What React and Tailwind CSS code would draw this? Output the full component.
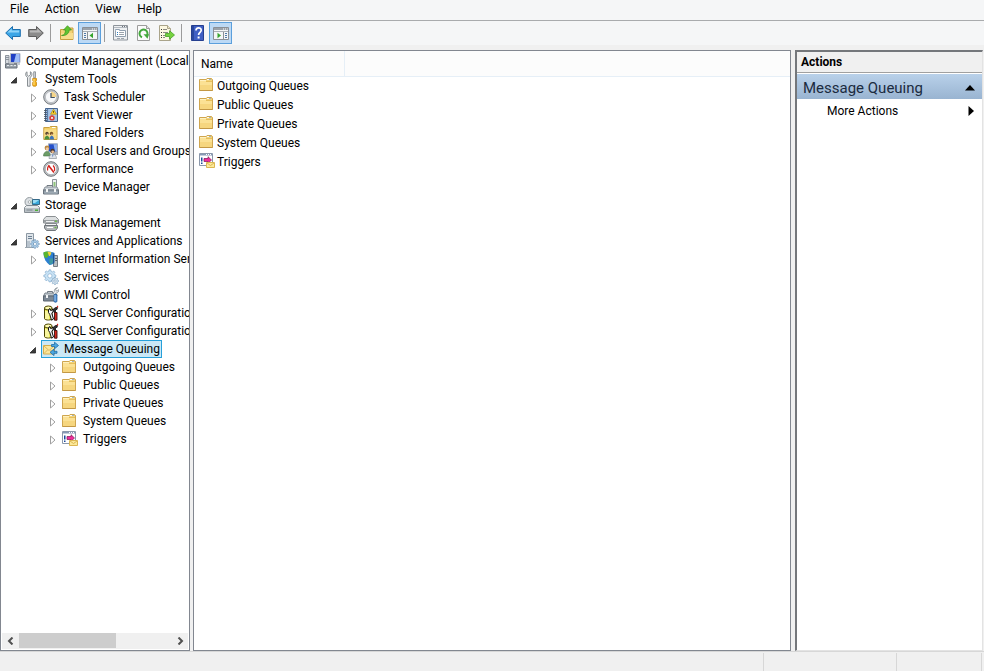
import React from "react";

function Svg({ children, className = "" }) {
  return (
    <svg
      viewBox="0 0 16 16"
      className={`block h-4 w-4 shrink-0 ${className}`}
      fill="none"
      aria-hidden="true"
    >
      {children}
    </svg>
  );
}

/* ---------- toolbar icons ---------- */

const BackIcon = () => (
  <Svg>
    <path d="M.7 8 7.500 1.500V4.500h7.800v7H7.500v3z" fill="#3aa5e6" stroke="#1c6fae" />
    <path d="M2.300 7.600 6.700 3.500v2h7.500v2.100z" fill="#8fd4f8" />
  </Svg>
);

const ForwardIcon = () => (
  <Svg>
    <path d="M15.300 8 8.500 1.500v3H.7v7h7.800v3z" fill="#8b8b8b" stroke="#5d5d5d" />
    <path d="M13.600 7.600 9.300 3.500v2H1.800v2.100z" fill="#b9b9b9" />
  </Svg>
);

const UpFolderIcon = () => (
  <Svg>
    <path d="M1.500 14.500v-10h5l1-1.500h6.500v11.500z" fill="#f3d277" stroke="#c99f3f" />
    <path d="M2 8h12v6H2z" fill="#f8dd8c" />
    <path d="M2.500 10.500C5.500 10 6.500 8 6.500 5H4.500L8.500.7l4 4.300h-2.300C10 9 6.500 11 2.500 10.500z" fill="#5fc431" stroke="#3b9420" strokeWidth=".7" />
  </Svg>
);

const PaneIcon = ({ flip }) => (
  <Svg>
    <path d="M.5 2.500h15v12H.5z" fill="#f4f5f6" stroke="#8a8f96" />
    <path d="M1 3h14v2H1z" fill="#9ba2aa" />
    <path d="M10 4h1M12 4h1M14 4h.7" stroke="#fff" />
    <path d="M1 6.500h14" stroke="#a9afb6" />
    {flip ? (
      <>
        <path d="M10.500 7v7.500" stroke="#8a8f96" />
        <path d="M12 8.500h2M12 10.500h2M12 12.500h2" stroke="#4f79a8" />
        <path d="m4.500 7.800 3.500 2.700-3.500 2.700z" fill="#36a52d" />
      </>
    ) : (
      <>
        <path d="M5.500 7v7.500" stroke="#8a8f96" />
        <path d="M2 8.500h2M2 10.500h2M2 12.500h2" stroke="#4f79a8" />
        <path d="M11 7.800 7.500 10.500 11 13.200z" fill="#36a52d" />
      </>
    )}
  </Svg>
);

const PropertiesIcon = () => (
  <Svg>
    <path d="M.5.500h14v14.500H.5z" fill="#eef0f2" stroke="#8e949b" />
    <path d="M1 2.500h13" stroke="#b4bac1" />
    <path d="M9 1.500h1M11 1.500h1M13 1.500h.7" stroke="#6b727a" />
    <path d="M2.500 5.500v-1h4v1h6v6h-10z" fill="#fff" stroke="#91a0b0" />
    <path d="M4 7.500h1M4 9.500h1" stroke="#2d7fc0" />
    <path d="M6 7.500h5M6 9.500h5" stroke="#9ba3ac" />
    <path d="M4 13.500h3M8 13.500h3" stroke="#9ba3ac" />
  </Svg>
);

const RefreshIcon = () => (
  <Svg>
    <path d="M1.500.5h9l3 3v12h-12z" fill="#fbfbfb" stroke="#9c9c9c" />
    <path d="M10.500.5v3h3" fill="#e4e4e4" stroke="#9c9c9c" />
    <path d="M6 12.300A4 4 0 1 1 10.700 11" stroke="#43a83c" strokeWidth="2" />
    <path d="M7.500 9.300h5.500l-1.500 4.500z" fill="#43a83c" />
  </Svg>
);

const ExportIcon = () => (
  <Svg>
    <path d="M.5.500h8l3 3v12H.5z" fill="#fdf8e1" stroke="#aaa48a" />
    <path d="M8.500.5v3h3" fill="#efe8c8" stroke="#aaa48a" />
    <path d="M2 4.500h1M2 7.500h1M2 10.500h1M2 12.500h1" stroke="#3b3b3b" />
    <path d="M4 4.500h4M4 7.500h5M4 10.500h2M4 12.500h2" stroke="#8c8a80" />
    <path d="M6.500 8.500h4V5.700l5 4.300-5 4.300v-2.800h-4z" fill="#76d23f" stroke="#449f24" strokeWidth=".8" />
  </Svg>
);

const HelpIcon = () => (
  <Svg>
    <path d="M1.500.5h12v15h-12z" fill="#3f5fc4" stroke="#263f8f" />
    <path d="M2 1h2v14H2z" fill="#29479f" />
    <path d="M6 5.500C6 2 11.200 2 11.200 5.300c0 2-2.600 2.200-2.600 4.700" stroke="#fff" strokeWidth="1.700" />
    <path d="M7.600 11.500h2v2h-2z" fill="#fff" />
  </Svg>
);

/* ---------- tree and list icons ---------- */

const ComputerIcon = () => (
  <Svg>
    <path d="M5.500.5h9.500v9H5.500z" fill="#1f3fc4" stroke="#b4bac6" />
    <path d="M11 1h3.500v8H9z" fill="#9dbcf7" />
    <path d="M9 10h3v1.500H9z" fill="#8d949d" />
    <path d="M.5 2.500h3.500v8H.5z" fill="#d6dae0" stroke="#8d949d" />
    <path d="M1 4.500h3M1 6.500h3" stroke="#8b939d" />
    <path d="M.5 11h11.500v4H.5z" fill="#9aa2aa" stroke="#6b737c" />
    <path d="M2 12.500h2M5.500 12.500h2M9 12.500h2" stroke="#e6eaed" />
    <path d="M12 10h3v2h-3z" fill="#c3c9d1" />
  </Svg>
);

const ToolsIcon = () => (
  <Svg>
    <path d="M3 .8v3l1.700 1.500L6.400 3.800v-3c2 .8 2.200 4-.3 5.700v8.700H3.500V6.500C1 4.800 1.200 1.600 3 .8z" fill="#e7e9eb" stroke="#7d8388" strokeWidth=".9" />
    <path d="M9.700.8h1.800v6H9.700z" fill="#d4d8dc" stroke="#80868b" strokeWidth=".8" />
    <path d="M8.700 7.500h3.800v2l-.7 1 .7 1v3c0 1-3.800 1-3.800 0v-3l.7-1-.7-1z" fill="#f4b21b" stroke="#c88710" strokeWidth=".8" />
    <path d="M10 8v6" stroke="#ffe08a" />
  </Svg>
);

const ClockIcon = () => (
  <Svg>
    <circle cx="8" cy="8" r="7.300" fill="#c9ccd0" stroke="#74797e" />
    <circle cx="8" cy="8" r="5.600" fill="#f7f8fa" stroke="#a2a7ac" strokeWidth=".6" />
    <path d="M8 2.600A5.400 5.400 0 0 1 13.400 8H8z" fill="#f5d58a" />
    <path d="M8 4v4.500h3.800" stroke="#3d4f63" strokeWidth="1.200" />
  </Svg>
);

const EventIcon = () => (
  <Svg>
    <path d="M2.500 1.500h12v13h-12z" fill="#9fbde0" stroke="#46658f" />
    <path d="M4 2h1v12H4z" fill="#5a7cab" />
    <path d="M6 2h8v12H6z" fill="#a9c5e6" />
    <path d="M1 3.500h3M1 5.500h3M1 7.500h3M1 9.500h3M1 11.500h3M1 13.500h3" stroke="#444f5d" strokeWidth=".8" />
    <path d="m10.500 2.200 3 5h-6z" fill="#ffd52e" stroke="#b68d0b" strokeWidth=".7" />
    <path d="M10.500 4v1.800" stroke="#403400" strokeWidth=".8" />
    <circle cx="9" cy="10.900" r="2.700" fill="#d93c36" />
    <path d="m8 9.900 2 2m0-2-2 2" stroke="#fff" strokeWidth=".9" />
  </Svg>
);

const SharedIcon = () => (
  <Svg>
    <path d="M.8 14.500v-12h5.500l1-1H14v13z" fill="#f3cf68" stroke="#c99f3f" />
    <path d="M1.300 4.500h12.200V14H1.300z" fill="#f8dc87" />
    <path d="M9 2.500h3.500" stroke="#fff" />
    <circle cx="4" cy="8.500" r="1.700" fill="#584630" />
    <circle cx="8.500" cy="8.500" r="1.700" fill="#785020" />
    <path d="M1.500 14.500c0-5 5-5 5 0z" fill="#4c8f3c" />
    <path d="M6.500 14.500c0-5 4.500-5 4.500 0z" fill="#3f74b8" />
    <path d="M3.700 8.700h1.300v1.300H3.700zM8.200 8.700h1.300v1.300H8.200z" fill="#e9b98d" />
  </Svg>
);

const UsersIcon = () => (
  <Svg>
    <path d="M5.500.8h9v8h-9z" fill="#2550ca" stroke="#a2aaba" />
    <path d="M10.500 1.200H14v7h-2z" fill="#8cb0f0" />
    <path d="M10 9h5v3h-5z" fill="#a6adb7" />
    <circle cx="4" cy="5" r="2.400" fill="#b98a45" />
    <circle cx="4.300" cy="5.800" r="1.500" fill="#f0c7a0" />
    <path d="M.5 13c0-6 7-6 7 0z" fill="#6b9d66" stroke="#49734a" strokeWidth=".6" />
    <circle cx="9.500" cy="8" r="2.200" fill="#4a3829" />
    <circle cx="9.700" cy="8.800" r="1.400" fill="#eab98e" />
    <path d="M6 15.500c0-6 7.500-6 7.500 0z" fill="#dfe3e8" stroke="#7d848c" strokeWidth=".6" />
    <path d="m9.200 11.500.6 3 .6-3z" fill="#3867b4" />
  </Svg>
);

const PerformanceIcon = () => (
  <Svg>
    <circle cx="8" cy="8" r="7.300" fill="#c2c5c8" stroke="#6f7478" />
    <circle cx="8" cy="8" r="5.700" fill="#fff" stroke="#8f9498" strokeWidth=".6" />
    <path d="M4.700 9.500c-.5-2 .2-4 1.500-5M11.500 10c.4-2 .3-4-1.500-5.500" stroke="#d2231d" strokeWidth="1.100" />
    <path d="m5.500 4.500 5.500 7" stroke="#d2231d" strokeWidth="1.600" />
  </Svg>
);

const DeviceIcon = () => (
  <Svg>
    <path d="M9.500.5h4v8h-4z" fill="#eef1f3" stroke="#8b9399" />
    <path d="M10.500 3h2v4.500h-2z" fill="#8fc37a" />
    <path d="M4 8V6.500h5.500V8" stroke="#727a82" />
    <path d="M2 8h12l1.500 3H.5z" fill="#ccd3d9" stroke="#8a929a" />
    <path d="M.5 11h15v4H.5z" fill="#93a0ab" stroke="#6a747e" />
    <path d="M3 10h2v3H3zM11 10h2v3h-2z" fill="#f4f6f7" />
    <path d="M1.500 14h13" stroke="#b6bfc7" strokeWidth=".7" />
  </Svg>
);

const StorageIcon = () => (
  <Svg>
    <circle cx="5.500" cy="5" r="4.500" fill="#dde1e4" stroke="#929a9f" />
    <path d="m5.500 5 3.500-2.500V8z" fill="#b4d4bd" />
    <circle cx="5.500" cy="5" r="1.300" fill="#fff" stroke="#8d959a" strokeWidth=".7" />
    <path d="M8.500 2.500h7v5h-7z" fill="#38a7d9" stroke="#356a8a" />
    <path d="M9 3h6l-4 3H9z" fill="#9adbf3" />
    <path d="M2.500 8.500h11l2 2v5H.5v-5z" fill="#e5e8ea" stroke="#858d93" />
    <path d="M1 11h14v4H1z" fill="#bac1c6" />
    <path d="M11 12.500h3v1.500h-3z" fill="#4fae3a" />
    <path d="M2.500 13h6" stroke="#7d868d" />
  </Svg>
);

const DiskIcon = () => (
  <Svg>
    <path d="M3 1.500h9.500l3 3v3.500H.5V4.500z" fill="#dcdfe0" stroke="#8b9093" />
    <path d="M1 5h14v2.500H1z" fill="#9a9fa2" />
    <path d="M3 6.500h8" stroke="#f0f1f2" />
    <path d="M2.500 8.500h11v2h-11z" fill="#f4f5f6" stroke="#85898d" />
    <path d="M1.500 10.500h13V13l-2 2.500h-9L1.500 13z" fill="#b3b7ba" stroke="#70757a" />
    <path d="M4 12.500h6" stroke="#fff" />
    <path d="M12 5.500h2v1.500h-2zM11.500 11.700h2v1.500h-2z" fill="#71b84e" />
  </Svg>
);

const GEAR =
  "M7 1h2l.4 1.800 1.500.6 1.600-1 1.300 1.400-1 1.500.6 1.500L15 7v2l-1.700.4-.6 1.500 1 1.500-1.400 1.400-1.500-1-1.500.6L9 15H7l-.4-1.700-1.500-.6-1.500 1-1.400-1.400 1-1.500-.6-1.500L1 9V7l1.800-.4.6-1.500-1-1.500 1.400-1.400 1.500 1 1.500-.6zM8 5.500a2.500 2.500 0 1 0 0 5 2.500 2.500 0 0 0 0-5z";

const ServicesAppsIcon = () => (
  <Svg>
    <path d="M2.500.5h7v14h-7z" fill="#dfe5ea" stroke="#8c98a3" />
    <path d="M4 3.500h4M4 5.500h4" stroke="#6d8093" />
    <path d="M3 8h3v6H3z" fill="#b9c4ce" />
    <path d="M1 14.500h7" stroke="#9ba6af" />
    <g transform="translate(6 6) scale(.62)">
      <path d={GEAR} fill="#a8cbe7" stroke="#6d93b7" fillRule="evenodd" />
    </g>
  </Svg>
);

const IisIcon = () => (
  <Svg>
    <path d="M10.500 4.500h4v11h-4z" fill="#b9bfc3" stroke="#757d83" />
    <path d="M12 7.500h2M12 9.500h2" stroke="#5e666c" />
    <path d="M.5 1.500c3-1.500 7-1.500 11 .5v9c-1 2-3 3-5 3C2.500 11 .5 7 .5 1.500z" fill="#2c7fd0" />
    <path d="M.5 1.500C2.500.5 4 .5 5.500.7 5 3.500 6.500 4.700 4 6.700c-1.500.3-2.300-.2-2.700-1C.7 4.500.5 3 .5 1.500z" fill="#59b52e" />
    <path d="M4.500.8c2-.2 3 .2 4 .6C7.500 4 7.500 5 6 5z" fill="#f4d337" />
    <path d="M6 8c2-1 4-1 4.500 0v3c-1 1.500-2.500 2.500-4 2.500z" fill="#3f97a0" />
    <path d="M10.700 2.500v10" stroke="#1a4783" />
  </Svg>
);

const ServicesIcon = () => (
  <Svg>
    <g transform="scale(.86)">
      <path d={GEAR} fill="#c9e3f5" stroke="#86aecf" strokeWidth=".8" fillRule="evenodd" />
    </g>
    <g transform="translate(8 8) scale(.5)">
      <path d={GEAR} fill="#e2eef7" stroke="#6f98bb" strokeWidth="1.200" fillRule="evenodd" />
    </g>
  </Svg>
);

const WmiIcon = () => (
  <Svg>
    <path d="M4.500 6V4.500h5V6" stroke="#6f7780" />
    <path d="M2 6h10.500l1.500 3H.5z" fill="#bcc4cb" stroke="#7d868f" />
    <path d="M.5 9h13v5H.5z" fill="#7c8895" stroke="#5c6671" />
    <path d="M3 8h2v3H3z" fill="#f2f4f6" />
    <path d="M14.500.8 12.500 2.500l.5 1.200 1.200.3L15.700 2.500c.3 2-1 3.700-2.700 3.700l-1.500 1.300-1.500-1.300 1.300-1.500C11 2.500 12.500.8 14.500.8z" fill="#e2e6e9" stroke="#7c858c" strokeWidth=".7" />
    <path d="M11 7.500h3v6.700c0 1.500-3 1.500-3 0z" fill="#4b8bd0" stroke="#29609b" strokeWidth=".7" />
    <path d="M12 8v6" stroke="#b8dafa" strokeWidth=".8" />
  </Svg>
);

const SqlIcon = () => (
  <Svg>
    <path d="M1.500 3v10.500c0 2 7.500 2 7.500 0V3z" fill="#f2ee5b" stroke="#4a4300" />
    <ellipse cx="5.300" cy="3" rx="3.800" ry="2" fill="#fffcb0" stroke="#4a4300" />
    <path d="M3 6v8M5 6.500v8" stroke="#fffde0" />
    <path d="M5.500 4.500 7 3.500V5l1.500.5L10 4v2.500L8.800 8.500 10.500 14l-2 1.200L6.800 9.500 5.500 7.500z" fill="#f5f5f5" stroke="#111" />
    <path d="M10 4.500 12.500 2.500h2L14 4.500h-1.500v3H11z" fill="#333" stroke="#111" strokeWidth=".8" />
    <path d="M11.500 7.500H14v7.700h-2.500z" fill="#d8261c" stroke="#40100c" strokeWidth=".9" />
    <path d="M14.500.8v1.700" stroke="#d8261c" strokeWidth="1.300" />
  </Svg>
);

const MessageQueueIcon = () => (
  <Svg>
    <path d="M.5 4.500h11v8.500H.5z" fill="#fbe79c" stroke="#d5ad4c" />
    <path d="m1 5 5 4.500L11 5M1 12.500 4.500 9M11 12.500 7.500 9" stroke="#d9b862" />
    <path d="M8.500 3.500h3V1.200l4 3.300-4 3.300V5.500h-3z" fill="#4aa7e0" stroke="#1e6ba6" strokeWidth=".8" />
    <path d="M14 10.300h-3V8l-4 3.300 4 3.300v-2.300h3z" fill="#4aa7e0" stroke="#1e6ba6" strokeWidth=".8" />
  </Svg>
);

const FolderIcon = () => (
  <Svg>
    <path d="M.5 13.500v-11H7l1-1h4.500l1 1v11z" fill="#ecc766" stroke="#cfa650" />
    <path d="M1 3.500h12V13H1z" fill="#fbe194" />
    <path d="M1 8h12v5H1z" fill="#f6d67f" />
    <path d="M1 3.500h6" stroke="#fff1c0" />
    <path d="M8 2.500h2" stroke="#fffdf2" />
    <path d="M10 2.500h2" stroke="#9fb6c6" />
    <path d="M7 4.500h6" stroke="#e6bf5c" />
    <path d="M.5 13.500h13" stroke="#c39845" />
  </Svg>
);

const TriggerIcon = () => (
  <Svg>
    <path d="M.5.500h13v12H.5z" fill="#fff" stroke="#8b98ab" />
    <path d="M1 1h12v1.500H1z" fill="#8799b5" />
    <path d="M7 1.500h1M9 1.500h1M11 1.500h1" stroke="#fff" />
    <path d="M2 4.500h1.500v4H2zM2 9.500h1.500V11H2z" fill="#1b4a9c" />
    <path d="M5 5.500h4V3.700L12.500 7 9 10.300V8.500H5z" fill="#ef2b9a" stroke="#7f1353" strokeWidth=".7" />
    <path d="M7.500 9.500h8v5h-8z" fill="#fbe99a" stroke="#dcb652" />
    <path d="m8 10 3.500 2.500L15 10" stroke="#dcb652" />
  </Svg>
);

/* ---------- data ---------- */

const PAD = ["pl-[2px]", "pl-[5px]", "pl-6", "pl-[43px]"];

const TREE = [
  { level: 0, label: "Computer Management (Local", Icon: ComputerIcon },
  { level: 1, label: "System Tools", Icon: ToolsIcon, state: "open" },
  { level: 2, label: "Task Scheduler", Icon: ClockIcon, state: "closed" },
  { level: 2, label: "Event Viewer", Icon: EventIcon, state: "closed" },
  { level: 2, label: "Shared Folders", Icon: SharedIcon, state: "closed" },
  { level: 2, label: "Local Users and Groups", Icon: UsersIcon, state: "closed" },
  { level: 2, label: "Performance", Icon: PerformanceIcon, state: "closed" },
  { level: 2, label: "Device Manager", Icon: DeviceIcon },
  { level: 1, label: "Storage", Icon: StorageIcon, state: "open" },
  { level: 2, label: "Disk Management", Icon: DiskIcon },
  { level: 1, label: "Services and Applications", Icon: ServicesAppsIcon, state: "open" },
  { level: 2, label: "Internet Information Services", Icon: IisIcon, state: "closed" },
  { level: 2, label: "Services", Icon: ServicesIcon },
  { level: 2, label: "WMI Control", Icon: WmiIcon },
  { level: 2, label: "SQL Server Configuration", Icon: SqlIcon, state: "closed" },
  { level: 2, label: "SQL Server Configuration", Icon: SqlIcon, state: "closed" },
  { level: 2, label: "Message Queuing", Icon: MessageQueueIcon, state: "open", selected: true },
  { level: 3, label: "Outgoing Queues", Icon: FolderIcon, state: "closed" },
  { level: 3, label: "Public Queues", Icon: FolderIcon, state: "closed" },
  { level: 3, label: "Private Queues", Icon: FolderIcon, state: "closed" },
  { level: 3, label: "System Queues", Icon: FolderIcon, state: "closed" },
  { level: 3, label: "Triggers", Icon: TriggerIcon, state: "closed" },
];

const LIST = [
  { label: "Outgoing Queues", Icon: FolderIcon },
  { label: "Public Queues", Icon: FolderIcon },
  { label: "Private Queues", Icon: FolderIcon },
  { label: "System Queues", Icon: FolderIcon },
  { label: "Triggers", Icon: TriggerIcon },
];

/* ---------- parts ---------- */

function ToolButton({ label, active, children }) {
  return (
    <button
      type="button"
      aria-label={label}
      aria-pressed={active}
      className={`flex h-[22px] w-[23px] items-center justify-center border ${
        active ? "border-[#5b9fdc] bg-[#bcd9f5]" : "border-transparent"
      }`}
    >
      {children}
    </button>
  );
}

const Separator = () => <span className="mr-1 ml-[3px] h-[18px] w-px bg-[#9b9b9b]" />;

function Expander({ state, label }) {
  if (!state) return <span className="w-4 shrink-0" />;
  return (
    <button
      type="button"
      aria-label={`${state === "open" ? "Collapse" : "Expand"} ${label}`}
      className="flex h-[18px] w-4 shrink-0 items-center justify-center pt-0.5"
    >
      <svg viewBox="0 0 8 10" className="h-[10px] w-2" fill="none" aria-hidden="true">
        {state === "open" ? (
          <path d="M6.500 2.500v5.500H1z" fill="#3c3c3c" stroke="#262626" strokeWidth=".8" />
        ) : (
          <path d="M2.500 1v8L7 5z" fill="#fff" stroke="#a0a0a0" />
        )}
      </svg>
    </button>
  );
}

function TreeRow({ level, label, Icon, state, selected }) {
  return (
    <li
      role="treeitem"
      aria-level={level + 1}
      aria-selected={!!selected}
      aria-expanded={state ? state === "open" : undefined}
      className={`flex h-[18px] items-center whitespace-nowrap ${PAD[level]}`}
    >
      {level > 0 && <Expander state={state} label={label} />}
      <span
        className={`flex h-[18px] shrink-0 items-center gap-[5px] border px-px ${
          selected ? "border-[#26a0da] bg-[#cbe8f6]" : "border-transparent"
        }`}
      >
        <Icon />
        <span>{label}</span>
      </span>
    </li>
  );
}

export default function App() {
  return (
    <div className="flex h-screen flex-col overflow-hidden bg-[#f0f0f0] font-['Roboto','Noto_Sans',sans-serif] text-[12px] leading-4 text-black">
      <nav className="flex h-[21px] shrink-0 border-b border-[#a9abad] bg-[#f5f6f7] pl-0.5">
        {["File", "Action", "View", "Help"].map((m) => (
          <button key={m} type="button" className="px-2 pb-0.5">
            {m}
          </button>
        ))}
      </nav>

      <div className="flex shrink-0 items-center bg-[#f5f6f7] py-px pl-px" role="toolbar">
        <ToolButton label="Back"><BackIcon /></ToolButton>
        <ToolButton label="Forward"><ForwardIcon /></ToolButton>
        <Separator />
        <ToolButton label="Up one level"><UpFolderIcon /></ToolButton>
        <ToolButton label="Show or hide console tree" active><PaneIcon /></ToolButton>
        <Separator />
        <ToolButton label="Properties"><PropertiesIcon /></ToolButton>
        <ToolButton label="Refresh"><RefreshIcon /></ToolButton>
        <ToolButton label="Export list"><ExportIcon /></ToolButton>
        <Separator />
        <ToolButton label="Help"><HelpIcon /></ToolButton>
        <ToolButton label="Show or hide action pane" active><PaneIcon flip /></ToolButton>
      </div>

      <main className="flex min-h-0 flex-1 pt-[5px]">
        <section className="flex w-[190px] shrink-0 flex-col border border-[#828790] bg-white">
          <ul role="tree" className="min-h-0 flex-1 overflow-hidden pt-px">
            {TREE.map((row, i) => (
              <TreeRow key={i} {...row} />
            ))}
          </ul>
          <div className="mx-px mb-px flex h-4 shrink-0 bg-[#f0f0f0]">
            <button type="button" aria-label="Scroll left" className="flex w-[17px] items-center justify-center">
              <svg viewBox="0 0 8 8" className="h-2 w-2" fill="none" aria-hidden="true">
                <path d="M5.500.5 2 4l3.500 3.500" stroke="#505050" strokeWidth="2" />
              </svg>
            </button>
            <div className="flex-1">
              <div className="h-[15px] w-[64%] bg-[#cdcdcd]" />
            </div>
            <button type="button" aria-label="Scroll right" className="flex w-[17px] items-center justify-center">
              <svg viewBox="0 0 8 8" className="h-2 w-2" fill="none" aria-hidden="true">
                <path d="M2.500.5 6 4 2.500 7.500" stroke="#505050" strokeWidth="2" />
              </svg>
            </button>
          </div>
        </section>

        <section className="ml-[3px] min-w-0 flex-1 border border-[#828790] bg-white">
          <table className="w-full table-fixed border-collapse text-left">
            <colgroup>
              <col className="w-[150px]" />
              <col />
            </colgroup>
            <thead>
              <tr className="h-[25px] border-b border-[#e6eff7] bg-[#fcfcfc]">
                <th scope="col" className="border-r border-[#e6eff7] pt-0.5 pl-[7px] font-normal">Name</th>
                <td />
              </tr>
            </thead>
            <tbody>
              {LIST.map(({ label, Icon }) => (
                <tr key={label} className="h-[19px]">
                  <td className="p-0 pl-[5px]">
                    <span className="flex h-[18px] gap-0.5 whitespace-nowrap">
                      <Icon />
                      <span className="leading-[18px]">{label}</span>
                    </span>
                  </td>
                  <td />
                </tr>
              ))}
            </tbody>
          </table>
        </section>

        <aside className="mr-px ml-1 w-[188px] shrink-0 border-t-2 border-r border-b border-l-2 border-t-[#74777b] border-r-[#e3e3e3] border-b-[#e3e3e3] border-l-[#74777b] bg-white">
          <h2 className="h-[21px] border-b border-[#a0a0a0] bg-[#f0f0f0] pl-1 text-[12px] leading-5 font-bold">
            Actions
          </h2>
          <button
            type="button"
            className="mt-px flex h-[25px] w-full items-center justify-between bg-linear-to-b from-[#b9d1ea] to-[#99b4d1] pt-0.5 pr-[7px] pl-1.5 text-[15px] text-[#1b2b40]"
          >
            Message Queuing
            <svg viewBox="0 0 10 6" className="h-1.5 w-[10px]" aria-hidden="true">
              <path d="M5 0 10 5.500H0z" fill="#000" />
            </svg>
          </button>
          <button type="button" className="flex h-6 w-full items-center justify-between pr-2 pl-[30px]">
            More Actions
            <svg viewBox="0 0 6 10" className="h-[10px] w-1.5" aria-hidden="true">
              <path d="M.5 0 6 5 .5 10z" fill="#000" />
            </svg>
          </button>
        </aside>
      </main>

      <footer className="flex h-5 shrink-0 border-t border-[#d7d7d7] pt-px pr-0.5">
        <div className="flex-1 border-r border-[#d7d7d7]" />
        <div className="w-[133px] border-r border-[#d7d7d7]" />
        <div className="w-[85px] border-r border-[#d7d7d7]" />
      </footer>
    </div>
  );
}
